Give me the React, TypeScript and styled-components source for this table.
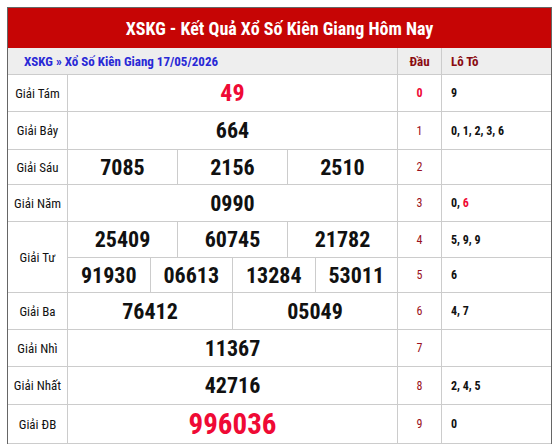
import React from "react";
import styled, { createGlobalStyle } from "styled-components";

const Global = createGlobalStyle`
  html, body { margin: 0; padding: 0; background: #fff; }
  body { padding: 7px 4px 0 7px; font-family: Roboto, "Liberation Sans", Arial, sans-serif; font-stretch: 75%; }
`;

const Box = styled.div`
  width: 543px;
  border: 1px solid #666;
  border-bottom: none;
  font-stretch: 75%;
`;

const Title = styled.div`
  height: 40px;
  background: #c60505;
  color: #fff;
  font-weight: 700;
  font-size: 18px;
  display: flex;
  align-items: center;
  justify-content: center;
`;

const Grid = styled.div`
  display: grid;
  grid-template-columns: 60px 330px 44px 109px;
  grid-template-rows: 27px 37px 38px 35px 37px 36px 35px 37px 37px 38px 39px;
`;

const HeadCell = styled.div<{ $align?: string; $last?: boolean }>`
  background: #eeeeee;
  border-bottom: 1px solid #ccc;
  border-right: ${(p) => (p.$last ? "none" : "1px solid #ccc")};
  display: flex;
  align-items: center;
  justify-content: ${(p) => p.$align || "center"};
  font-weight: 700;
  font-size: 13px;
  color: #8a0c12;
  padding: ${(p) => (p.$align === "flex-start" ? "0 0 0 9px" : "0")};
`;

const Crumb = styled(HeadCell)`
  grid-column: 1 / span 2;
  justify-content: flex-start;
  padding-left: 16px;
  color: #2929d6;
`;

const Label = styled.div<{ $span?: number }>`
  grid-row: span ${(p) => p.$span || 1};
  border-right: 1px solid #ccc;
  border-bottom: 1px solid #ccc;
  display: flex;
  align-items: center;
  justify-content: center;
  font-size: 13px;
  color: #111;
`;

const PrizeRow = styled.div`
  display: flex;
  border-right: 1px solid #ccc;
  border-bottom: 1px solid #ccc;
`;

const Num = styled.div<{ $size: number; $red?: boolean }>`
  flex: 1;
  display: flex;
  align-items: center;
  justify-content: center;
  font-weight: 700;
  font-size: ${(p) => p.$size}px;
  color: ${(p) => (p.$red ? "#ef0a35" : "#111")};
  & + & { border-left: 1px solid #ccc; }
`;

const Dau = styled.div<{ $hot?: boolean }>`
  border-right: 1px solid #ccc;
  border-bottom: 1px solid #ccc;
  display: flex;
  align-items: center;
  justify-content: center;
  font-size: 12px;
  font-weight: ${(p) => (p.$hot ? 700 : 400)};
  color: ${(p) => (p.$hot ? "#ef0a35" : "#9a1020")};
`;

const Loto = styled.div`
  border-bottom: 1px solid #ccc;
  display: flex;
  align-items: center;
  padding-left: 9px;
  font-size: 12px;
  font-weight: 700;
  color: #111;
  white-space: pre;
`;

const Red = styled.span`
  color: #ef0a35;
`;

type Row = { label?: string; span?: number; nums: string[]; size: number; red?: boolean };

const rows: Row[] = [
  { label: "Giải Tám", nums: ["49"], size: 24, red: true },
  { label: "Giải Bảy", nums: ["664"], size: 22 },
  { label: "Giải Sáu", nums: ["7085", "2156", "2510"], size: 22 },
  { label: "Giải Năm", nums: ["0990"], size: 22 },
  { label: "Giải Tư", span: 2, nums: ["25409", "60745", "21782"], size: 22 },
  { nums: ["91930", "06613", "13284", "53011"], size: 22 },
  { label: "Giải Ba", nums: ["76412", "05049"], size: 22 },
  { label: "Giải Nhì", nums: ["11367"], size: 22 },
  { label: "Giải Nhất", nums: ["42716"], size: 22 },
  { label: "Giải ĐB", nums: ["996036"], size: 29, red: true },
];

const lotos: React.ReactNode[] = [
  "9",
  "0, 1, 2, 3, 6",
  "",
  <span>{"0, "}<Red>6</Red></span>,
  "5, 9, 9",
  "6",
  "4, 7",
  "",
  "2, 4, 5",
  "0",
];

export default function App() {
  return (
    <>
      <Global />
      <Box>
        <Title>XSKG - Kết Quả Xổ Số Kiên Giang Hôm Nay</Title>
        <Grid>
          <Crumb>XSKG » Xổ Số Kiên Giang 17/05/2026</Crumb>
          <HeadCell>Đầu</HeadCell>
          <HeadCell $align="flex-start" $last>Lô Tô</HeadCell>
          {rows.map((r, i) => (
            <React.Fragment key={i}>
              {r.label && <Label $span={r.span}>{r.label}</Label>}
              <PrizeRow>
                {r.nums.map((n) => (
                  <Num key={n} $size={r.size} $red={r.red}>{n}</Num>
                ))}
              </PrizeRow>
              <Dau $hot={i === 0}>{i}</Dau>
              <Loto>{lotos[i]}</Loto>
            </React.Fragment>
          ))}
        </Grid>
      </Box>
    </>
  );
}
